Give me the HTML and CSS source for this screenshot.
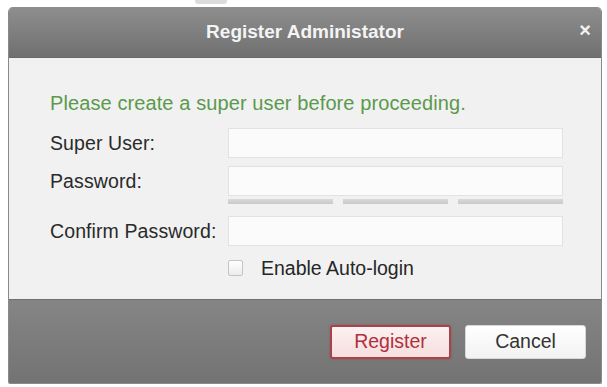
FILE: index.html
```html
<!DOCTYPE html>
<html>
<head>
<meta charset="utf-8">
<link rel="stylesheet" href="styles.css">
</head>
<body>
<div class="tab"></div>
<div class="dialog">
  <div class="titlebar">
    <span class="title">Register Administator</span>
    <span class="close">&#215;</span>
  </div>
  <div class="content">
    <div class="msg">Please create a super user before proceeding.</div>
    <div class="form">
      <label class="label">Super User:</label>
      <div class="field"><div class="input"></div></div>
      <label class="label">Password:</label>
      <div class="field"><div class="input"></div></div>
      <div></div>
      <div class="strength"><span></span><span></span><span></span></div>
      <label class="label">Confirm Password:</label>
      <div class="field"><div class="input"></div></div>
      <div></div>
      <div class="check"><span class="box"></span><span class="check-label">Enable Auto-login</span></div>
    </div>
  </div>
  <div class="footer">
    <button class="btn btn-primary">Register</button>
    <button class="btn">Cancel</button>
  </div>
</div>
</body>
</html>
```
FILE: styles.css
```css
html, body {
  margin: 0;
  padding: 0;
  background: #ffffff;
  font-family: "Liberation Sans", Arial, sans-serif;
}
body {
  padding: 7px 5px 0 8px;
  position: relative;
}
.tab {
  position: absolute;
  left: 195px;
  top: 0;
  width: 32px;
  height: 4px;
  background: #dcdcdc;
  border-radius: 0 0 3px 3px;
}
.dialog {
  width: 594px;
  border: 1px solid #8a8a8a;
  border-top: none;
  border-radius: 5px 5px 2px 2px;
  overflow: hidden;
  box-sizing: border-box;
  background: #f1f1f1;
}
.titlebar {
  height: 51px;
  background: linear-gradient(#8e8e8e, #707070);
  display: flex;
  align-items: center;
  justify-content: center;
  position: relative;
  border-bottom: 1px solid #6a6a6a;
  box-sizing: border-box;
}
.title {
  color: #f4f4f4;
  font-weight: bold;
  font-size: 19px;
  letter-spacing: 0;
}
.close {
  position: absolute;
  right: 10px;
  top: 12px;
  color: #f2f2f2;
  font-weight: bold;
  font-size: 20px;
}
.content {
  height: 241px;
  box-sizing: border-box;
  padding: 35px 0 0 41px;
  background: #f1f1f1;
}
.msg {
  color: #5a9a4c;
  font-size: 20px;
  line-height: 20px;
  letter-spacing: 0.1px;
  margin-bottom: 15px;
}
.form {
  display: grid;
  grid-template-columns: 178px 335px;
  row-gap: 8px;
  align-items: center;
}
.label {
  font-size: 19.5px;
  color: #2a2a2a;
  letter-spacing: 0.1px;
  line-height: 20px;
}
.input {
  height: 30px;
  box-sizing: border-box;
  border: 1px solid #e2e2e2;
  background: #fbfbfb;
}
.strength {
  display: grid;
  grid-template-columns: repeat(3, 1fr);
  column-gap: 10px;
  margin-top: -5px;
  margin-bottom: 4px;
}
.strength span {
  height: 5px;
  background: linear-gradient(#d9d9d9, #c9c9c9);
}
.check {
  display: flex;
  align-items: center;
  margin-top: 4px;
}
.box {
  width: 13px;
  height: 14px;
  border: 1px solid #c4c4c4;
  border-radius: 2px;
  background: linear-gradient(#ffffff, #ececec);
  margin-right: 18px;
}
.check-label {
  font-size: 19.5px;
  line-height: 20px;
  color: #262626;
  letter-spacing: 0;
}
.footer {
  height: 84px;
  background: linear-gradient(#858585, #737373);
  border-top: 1px solid #6e6e6e;
  box-sizing: border-box;
  display: flex;
  align-items: center;
  justify-content: flex-end;
  gap: 14px;
  padding-right: 15px;
}
.btn {
  width: 121px;
  height: 34px;
  font-family: "Liberation Sans", Arial, sans-serif;
  font-size: 19.5px;
  color: #333333;
  background: linear-gradient(#ffffff, #f2f2f2);
  border: 1px solid #d8d8d8;
  border-radius: 3px;
  padding: 0;
}
.btn-primary {
  color: #b0303e;
  background: linear-gradient(#fdf1f1, #f6dede);
  border: 2px solid #a8434c;
  box-shadow: 0 0 2px rgba(160, 40, 50, 0.5);
}
```
